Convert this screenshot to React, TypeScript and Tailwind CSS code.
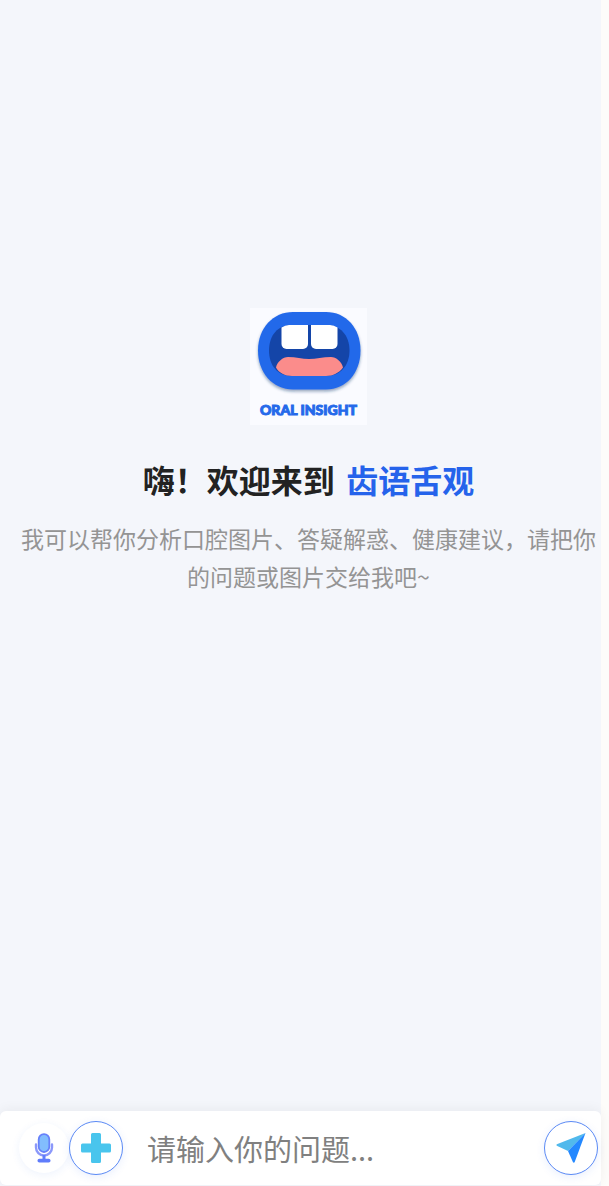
import { useState } from 'react';

function Logo() {
  return (
    <figure className="flex size-[117px] flex-col items-center bg-[#fafbff]">
      <svg viewBox="0 0 117 92" className="h-[92px] w-full" aria-hidden="true">
        <defs>
          <filter id="mouth-shadow" x="-10%" y="-10%" width="120%" height="130%">
            <feDropShadow dx="0" dy="2" stdDeviation="1.5" floodColor="#1e3a6e" floodOpacity="0.45" />
          </filter>
        </defs>
        <path
          filter="url(#mouth-shadow)"
          fill="#2469ea"
          d="M43 4h33C96 4 110.500 20 110.500 42.500S96 81.500 76 81.500H43C23 81.500 8 65 8 42.500S23 4 43 4Z"
        />
        <path
          fill="#1445a8"
          d="M42 17h34C90 17 99.500 27 99.500 42.500S90 68 76 68H42C28 68 19 58 19 42.500S28 17 42 17Z"
        />
        <path fill="#fff" d="M31.500 19.500Q35 17 39 17H58V36a5 5 0 0 1-5 5H36.500a5 5 0 0 1-5-5Z" />
        <path fill="#fff" d="M61 17H80Q84 17 87.500 19.500V36a5 5 0 0 1-5 5H66a5 5 0 0 1-5-5Z" />
        <path
          fill="#fb8c8b"
          d="M26 59.500C27 54 33 49 38 49C46 49 52 51 59 51S73 49 81 49C86 49 92 54 93 59.500C89 65 83 68 76 68H42C35 68 29 65 26 59.500Z"
        />
      </svg>
      <figcaption className="font-[Lato] text-[14px] leading-5 font-black whitespace-nowrap text-[#2469ea] [-webkit-text-stroke:1px_#2469ea]">
        ORAL INSIGHT
      </figcaption>
    </figure>
  );
}

function MicIcon() {
  return (
    <svg viewBox="0 0 20 30" className="h-[30px] w-5" fill="none" aria-hidden="true">
      <path d="M2 11.500v3a8 8 0 0 0 16 0v-3" stroke="#8b98fa" strokeWidth="2.400" strokeLinecap="round" />
      <rect x="4.700" y="1.200" width="10.600" height="17.800" rx="5.200" fill="#82bdfd" stroke="#6781fa" strokeWidth="1.800" />
      <path d="M10 22v5" stroke="#5f7cfb" strokeWidth="3" />
      <rect x="3.500" y="25.800" width="13" height="3.800" rx="1.800" fill="#5f7cfb" />
    </svg>
  );
}

function PlusIcon() {
  return (
    <svg viewBox="0 0 30 30" className="size-[30px]" fill="#49c5ed" aria-hidden="true">
      <path d="M11.500 0h7a1.500 1.500 0 0 1 1.500 1.500V10.500h8.500a1.500 1.500 0 0 1 1.500 1.500v6a1.500 1.500 0 0 1-1.500 1.500H20v9a1.500 1.500 0 0 1-1.500 1.500h-7a1.500 1.500 0 0 1-1.500-1.500v-9H1.500A1.500 1.500 0 0 1 0 18v-6a1.500 1.500 0 0 1 1.500-1.500H10V1.500A1.500 1.500 0 0 1 11.500 0Z" />
    </svg>
  );
}

function SendIcon() {
  return (
    <svg viewBox="0 0 30 30" className="size-[30px]" aria-hidden="true">
      <path d="M29.500 0 .8 11.200Q0 12 .8 12.800L12 18Z" fill="#51b9ec" />
      <path d="M29.500 0 12 18l5 11.200q.8.900 1.600 0Z" fill="#2388ff" />
    </svg>
  );
}

const circle = 'flex shrink-0 items-center justify-center rounded-full bg-white';
const outlined = 'size-[54px] border border-[#5b8af5] shadow-[0_2px_8px_rgba(37,99,235,0.1)]';

export default function App() {
  const [question, setQuestion] = useState('');

  return (
    <div className="min-h-screen bg-[#fdfcfa] pr-2 font-['Noto_Sans_CJK_SC',sans-serif]">
      <div className="flex min-h-screen flex-col bg-[#f4f6fb]">
        <main className="flex flex-1 flex-col items-center pt-[308px] pl-4 text-center">
          <Logo />
          <h1 className="mt-[30px] text-[32px] leading-12 font-bold text-[#222]">
            嗨！欢迎来到 <span className="ml-1 text-[#2563eb]">齿语舌观</span>
          </h1>
          <p className="mt-4 text-[23px] leading-[38px] text-[#949494]">
            我可以帮你分析口腔图片、答疑解惑、健康建议，请把你的问题或图片交给我吧~
          </p>
        </main>
        <form
          className="mb-px flex h-[74px] items-center rounded-md bg-white pr-[3px] pl-[19px] shadow-[0_-2px_12px_rgba(0,0,0,0.05)]"
          onSubmit={(event) => event.preventDefault()}
        >
          <button type="button" aria-label="语音输入" className={`${circle} size-[50px] shadow-[0_2px_8px_rgba(37,99,235,0.08)]`}>
            <MicIcon />
          </button>
          <button type="button" aria-label="添加图片" className={`${circle} ${outlined}`}>
            <PlusIcon />
          </button>
          <input
            type="text"
            aria-label="问题"
            value={question}
            onChange={(event) => setQuestion(event.target.value)}
            placeholder="请输入你的问题..."
            className="h-full min-w-0 flex-1 bg-transparent px-6 text-[29px] text-[#222] outline-none placeholder:text-[#808080]"
          />
          <button type="submit" aria-label="发送" className={`${circle} ${outlined}`}>
            <SendIcon />
          </button>
        </form>
      </div>
    </div>
  );
}
